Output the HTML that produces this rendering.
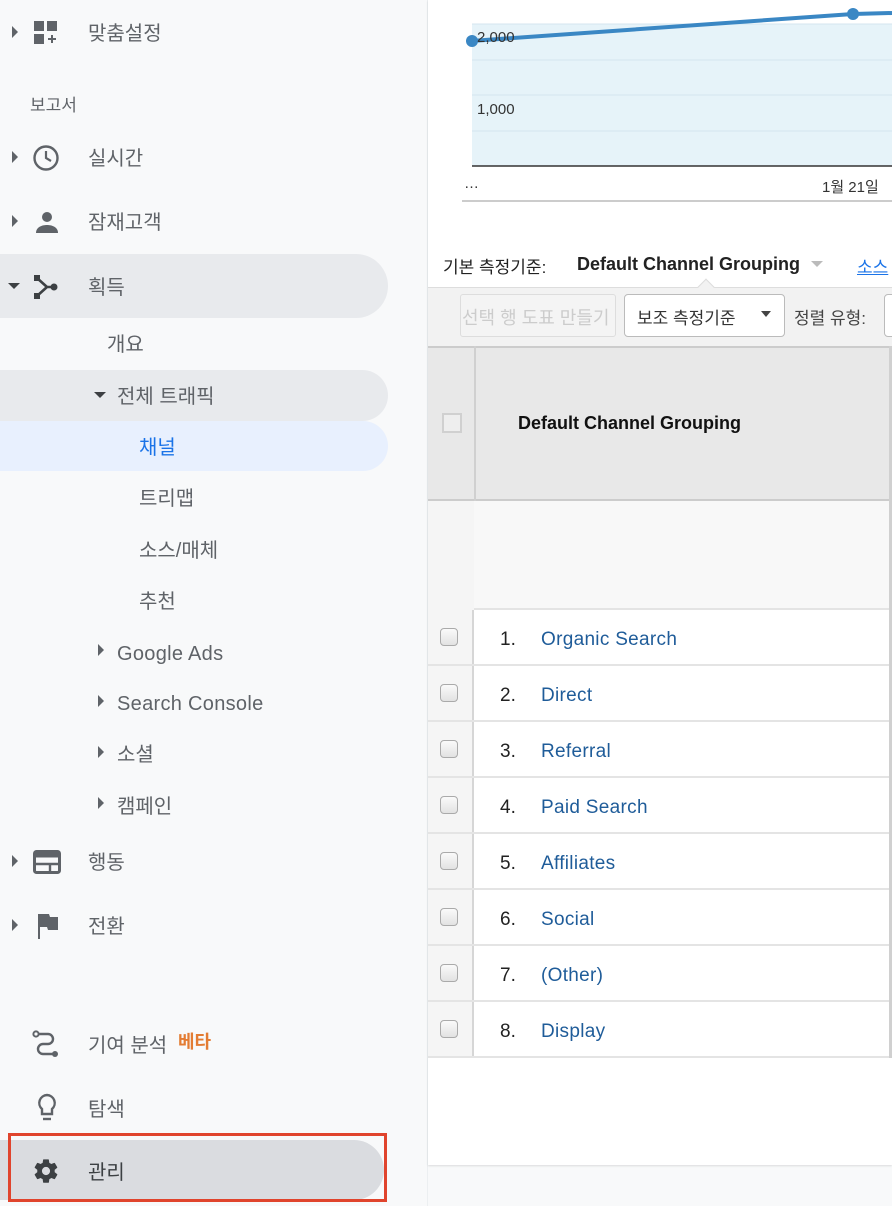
<!DOCTYPE html>
<html><head><meta charset="utf-8"><style>
*{margin:0;padding:0;box-sizing:border-box}
body{width:892px;height:1206px;position:relative;overflow:hidden;background:#f8f9fa;font-family:"Liberation Sans","Noto Sans CJK KR",sans-serif;color:#5f6368}
.a{position:absolute;white-space:nowrap}
.t{font-size:20px;line-height:24px;color:#5f6368;margin-top:2px}
.hl{position:absolute;left:0;width:388px;background:#e8eaed;border-radius:0 32px 32px 0}
.tri{position:absolute;width:0;height:0;border-top:6px solid transparent;border-bottom:6px solid transparent;border-left:6px solid #5f6368}
.trd{position:absolute;width:0;height:0;border-left:6px solid transparent;border-right:6px solid transparent;border-top:6px solid #3c4043}
.row{position:absolute;left:428px;width:464px;height:56px;border-bottom:2px solid #e4e4e4;background:#fff}
.row .ck{position:absolute;left:0;top:0;width:46px;height:54px;background:#f5f5f5;border-right:2px solid #d6d6d6}
.row .ck i{position:absolute;left:12px;top:18px;width:18px;height:18px;border:1.5px solid #aaa;border-radius:4px;background:linear-gradient(#fafafa,#e2e2e2)}
.row .n{position:absolute;left:72px;top:19px;font-size:19px;color:#222}
.row .l{position:absolute;left:113px;top:19px;font-size:19px;color:#1f5c99;letter-spacing:.3px}
</style></head><body>
<div class="a" style="left:427px;top:0;width:1px;height:1206px;background:#eceff1"></div>
<div class="tri" style="left:12px;top:26px"></div>
<svg class="a" style="left:33px;top:20px" width="26" height="26" viewBox="0 0 26 26"><rect x="1" y="1" width="10" height="10" fill="#5f6368"/><rect x="14" y="1" width="10" height="10" fill="#5f6368"/><rect x="1" y="14" width="10" height="10" fill="#5f6368"/><path d="M19 15v8M15 19h8" stroke="#5f6368" stroke-width="2"/></svg>
<div class="a t" style="left:88px;top:20px">맞춤설정</div>
<div class="a" style="left:30px;top:91px;font-size:17px;color:#5f6368">보고서</div>
<div class="tri" style="left:12px;top:151px"></div>
<svg class="a" style="left:33px;top:145px" width="28" height="28" viewBox="0 0 28 28"><circle cx="13" cy="13" r="11.5" fill="none" stroke="#5f6368" stroke-width="2.4"/><path d="M13 6v7l5 3" fill="none" stroke="#5f6368" stroke-width="2.2"/></svg>
<div class="a t" style="left:88px;top:145px">실시간</div>
<div class="tri" style="left:12px;top:215px"></div>
<svg class="a" style="left:35px;top:210px" width="24" height="24" viewBox="0 0 24 24"><circle cx="12" cy="7" r="5" fill="#5f6368"/><path d="M1 23c0-6 6-8 11-8s11 2 11 8z" fill="#5f6368"/></svg>
<div class="a t" style="left:88px;top:209px">잠재고객</div>
<div class="hl" style="top:254px;height:64px"></div>
<div class="trd" style="left:8px;top:283px"></div>
<svg class="a" style="left:33px;top:274px" width="26" height="26" viewBox="0 0 26 26"><rect x="1" y="1" width="6" height="6" fill="#3c4043"/><rect x="1" y="19" width="6" height="6" fill="#3c4043"/><path d="M4 4l10 9M4 22l10-9M14 13h5" stroke="#3c4043" stroke-width="2.6" fill="none"/><circle cx="21" cy="13" r="3.5" fill="#3c4043"/></svg>
<div class="a t" style="left:88px;top:274px">획득</div>
<div class="a t" style="left:107px;top:331px">개요</div>
<div class="hl" style="top:370px;height:51px"></div>
<div class="trd" style="left:94px;top:392px"></div>
<div class="a t" style="left:117px;top:383px">전체 트래픽</div>
<div class="hl" style="top:421px;height:50px;background:#e8f0fe"></div>
<div class="a t" style="left:139px;top:434px;color:#1a73e8">채널</div>
<div class="a t" style="left:139px;top:485px">트리맵</div>
<div class="a t" style="left:139px;top:537px">소스/매체</div>
<div class="a t" style="left:139px;top:588px">추천</div>
<div class="tri" style="left:98px;top:644px"></div>
<div class="a t" style="left:117px;top:640px;letter-spacing:.3px">Google Ads</div>
<div class="tri" style="left:98px;top:695px"></div>
<div class="a t" style="left:117px;top:690px;letter-spacing:.3px">Search Console</div>
<div class="tri" style="left:98px;top:746px"></div>
<div class="a t" style="left:117px;top:741px">소셜</div>
<div class="tri" style="left:98px;top:797px"></div>
<div class="a t" style="left:117px;top:793px">캠페인</div>
<div class="tri" style="left:12px;top:855px"></div>
<svg class="a" style="left:33px;top:850px" width="28" height="24" viewBox="0 0 28 24"><rect x="1.5" y="1.5" width="25" height="21" rx="2" fill="none" stroke="#5f6368" stroke-width="3"/><rect x="1.5" y="1.5" width="25" height="6" fill="#5f6368"/><path d="M3 14h22M17 14v8" stroke="#5f6368" stroke-width="2.4"/></svg>
<div class="a t" style="left:88px;top:849px">행동</div>
<div class="tri" style="left:12px;top:919px"></div>
<svg class="a" style="left:36px;top:913px" width="24" height="26" viewBox="0 0 24 26"><path d="M2 1h2v25H2z" fill="#5f6368"/><path d="M4 1h9l1 3h8v13H12l-1-3H4z" fill="#5f6368"/></svg>
<div class="a t" style="left:88px;top:913px">전환</div>
<svg class="a" style="left:32px;top:1030px" width="28" height="28" viewBox="0 0 28 28"><circle cx="4" cy="4" r="2.6" fill="none" stroke="#5f6368" stroke-width="2"/><path d="M6.5 4H16a5 5 0 0 1 0 10H11a5 5 0 0 0 0 10h10" fill="none" stroke="#5f6368" stroke-width="2.4"/><circle cx="23" cy="24" r="3" fill="#5f6368"/></svg>
<div class="a t" style="left:88px;top:1032px">기여 분석</div>
<div class="a" style="left:178px;top:1028px;font-size:18px;font-weight:bold;color:#e37c33">베타</div>
<svg class="a" style="left:36px;top:1093px" width="22" height="30" viewBox="0 0 22 30"><path d="M11 2a8 8 0 0 0-5 14v5h10v-5a8 8 0 0 0-5-14z" fill="none" stroke="#5f6368" stroke-width="2.4"/><path d="M7 26h8" stroke="#5f6368" stroke-width="2.4"/></svg>
<div class="a t" style="left:88px;top:1096px">탐색</div>
<div class="hl" style="top:1140px;height:60px;width:384px;background:#dadce0"></div>
<svg class="a" style="left:32px;top:1157px" width="28" height="28" viewBox="0 0 24 24"><path fill="#3c4043" d="M19.4 13c.04-.33.06-.66.06-1s-.02-.67-.06-1l2.1-1.65c.2-.15.25-.42.12-.64l-2-3.46c-.12-.22-.39-.3-.61-.22l-2.490 1c-.52-.4-1.080-.73-1.690-.98l-.38-2.650A.49.49 0 0 0 14 2h-4c-.25 0-.46.18-.49.42l-.38 2.65c-.61.25-1.170.59-1.690.98l-2.490-1c-.23-.09-.49 0-.61.22l-2 3.46c-.13.22-.07.49.12.64L4.57 11c-.04.33-.07.67-.07 1s.03.67.07 1l-2.110 1.65c-.19.15-.24.42-.12.64l2 3.46c.12.22.39.3.61.22l2.490-1c.52.4 1.080.73 1.690.98l.38 2.65c.03.24.24.42.49.42h4c.25 0 .46-.18.49-.42l.38-2.650c.61-.25 1.170-.59 1.690-.98l2.490 1c.23.09.49 0 .61-.22l2-3.460c.12-.22.07-.49-.12-.64L19.4 13zM12 15.5A3.5 3.5 0 1 1 12 8.5a3.5 3.5 0 0 1 0 7z"/></svg>
<div class="a t" style="left:88px;top:1159px;color:#3c4043">관리</div>
<div class="a" style="left:8px;top:1133px;width:379px;height:69px;border:3px solid #e0442d"></div>

<div class="a" style="left:428px;top:0;width:464px;height:1165px;background:#fff;box-shadow:0 1px 2px rgba(0,0,0,.12)"></div>
<svg class="a" style="left:428px;top:0" width="464" height="210" viewBox="0 0 464 210">
<rect x="44" y="24" width="420" height="142" fill="#e6f3f9"/>
<path d="M44 24H464M44 60H464M44 95H464M44 131H464" stroke="#d4e6ef" stroke-width="1"/>
<path d="M44 166H464" stroke="#333" stroke-width="1.5"/>
<path d="M43 41L425 14L464 13" stroke="#3a87c4" stroke-width="4" fill="none"/>
<circle cx="44" cy="41" r="6" fill="#3a87c4"/><circle cx="425" cy="14" r="6" fill="#3a87c4"/>
<path d="M34 201H464" stroke="#ccc" stroke-width="2"/>
</svg>
<div class="a" style="left:477px;top:29px;font-size:15px;color:#333">2,000</div>
<div class="a" style="left:477px;top:101px;font-size:15px;color:#333">1,000</div>
<div class="a" style="left:464px;top:175px;font-size:15px;color:#333">…</div>
<div class="a" style="left:822px;top:176px;font-size:15px;color:#333">1월 21일</div>
<div class="a" style="left:443px;top:253px;font-size:17px;color:#222">기본 측정기준:</div>
<div class="a" style="left:577px;top:254px;font-size:18px;font-weight:bold;color:#222">Default Channel Grouping</div>
<div class="a" style="left:811px;top:261px;border-left:6px solid transparent;border-right:6px solid transparent;border-top:6px solid #bbb"></div>
<div class="a" style="left:857px;top:253px;font-size:17px;color:#1a73e8;text-decoration:underline">소스</div>
<div class="a" style="left:428px;top:287px;width:464px;height:59px;background:#f2f2f2;border-top:1px solid #ddd"></div>
<div class="a" style="left:700px;top:281px;width:12px;height:12px;background:#f2f2f2;border-left:1px solid #ddd;border-top:1px solid #ddd;transform:rotate(45deg)"></div>
<div class="a" style="left:460px;top:294px;width:156px;height:43px;border:1px solid #ddd;border-radius:3px;background:#f4f4f4;font-size:18px;color:#ccc;padding:9px 0 0 1px;overflow:hidden">선택 행 도표 만들기</div>
<div class="a" style="left:624px;top:294px;width:161px;height:43px;border:1px solid #bbb;border-radius:4px;background:#fff;font-size:17px;color:#333;padding:9px 0 0 12px">보조 측정기준</div>
<div class="a" style="left:761px;top:311px;border-left:5px solid transparent;border-right:5px solid transparent;border-top:6px solid #444"></div>
<div class="a" style="left:794px;top:304px;font-size:17px;color:#444">정렬 유형:</div>
<div class="a" style="left:884px;top:294px;width:20px;height:43px;border:1px solid #bbb;border-radius:4px;background:#fff"></div>
<div class="a" style="left:428px;top:346px;width:464px;height:155px;background:#e8e8e8;border-top:2px solid #ccc;border-bottom:2px solid #ccc"></div>
<div class="a" style="left:474px;top:346px;width:2px;height:264px;background:#d0d0d0"></div>
<div class="a" style="left:442px;top:413px;width:20px;height:20px;border:2px solid #d0d0d0;background:#eee"></div>
<div class="a" style="left:518px;top:413px;font-size:18px;font-weight:bold;color:#111">Default Channel Grouping</div>
<div class="a" style="left:428px;top:501px;width:464px;height:109px;background:#f8f8f8;border-bottom:2px solid #e4e4e4"></div>
<div class="a" style="left:428px;top:501px;width:46px;height:109px;background:#f5f5f5"></div>
<div class="row" style="top:610px"><div class="ck"><i></i></div><div class="n">1.</div><div class="l">Organic Search</div></div>
<div class="row" style="top:666px"><div class="ck"><i></i></div><div class="n">2.</div><div class="l">Direct</div></div>
<div class="row" style="top:722px"><div class="ck"><i></i></div><div class="n">3.</div><div class="l">Referral</div></div>
<div class="row" style="top:778px"><div class="ck"><i></i></div><div class="n">4.</div><div class="l">Paid Search</div></div>
<div class="row" style="top:834px"><div class="ck"><i></i></div><div class="n">5.</div><div class="l">Affiliates</div></div>
<div class="row" style="top:890px"><div class="ck"><i></i></div><div class="n">6.</div><div class="l">Social</div></div>
<div class="row" style="top:946px"><div class="ck"><i></i></div><div class="n">7.</div><div class="l">(Other)</div></div>
<div class="row" style="top:1002px"><div class="ck"><i></i></div><div class="n">8.</div><div class="l">Display</div></div>
<div class="a" style="left:889px;top:346px;width:3px;height:712px;background:#d0d0d0"></div>
</body></html>
